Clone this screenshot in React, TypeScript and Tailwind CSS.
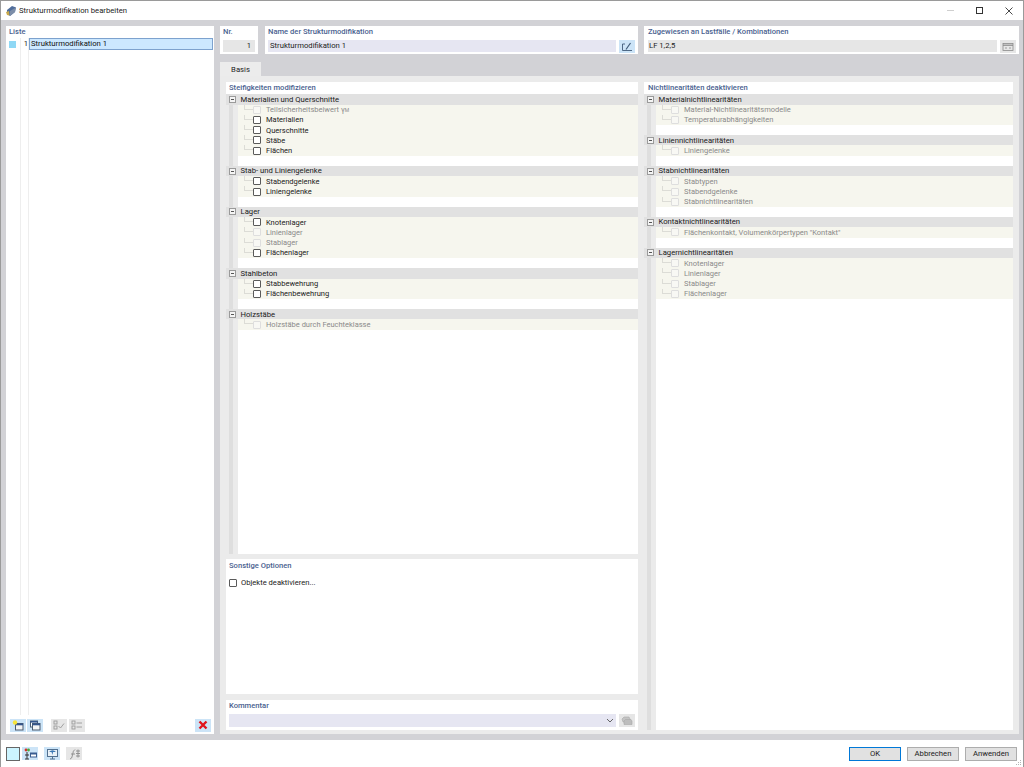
import React from "react";

type Item = { label: string; on?: boolean; sub?: string };
type Group = { title: string; items: Item[] };

const stiffness: Group[] = [
  {
    title: "Materialien und Querschnitte",
    items: [
      { label: "Teilsicherheitsbeiwert γ", sub: "M" },
      { label: "Materialien", on: true },
      { label: "Querschnitte", on: true },
      { label: "Stäbe", on: true },
      { label: "Flächen", on: true },
    ],
  },
  {
    title: "Stab- und Liniengelenke",
    items: [
      { label: "Stabendgelenke", on: true },
      { label: "Liniengelenke", on: true },
    ],
  },
  {
    title: "Lager",
    items: [
      { label: "Knotenlager", on: true },
      { label: "Linienlager" },
      { label: "Stablager" },
      { label: "Flächenlager", on: true },
    ],
  },
  {
    title: "Stahlbeton",
    items: [
      { label: "Stabbewehrung", on: true },
      { label: "Flächenbewehrung", on: true },
    ],
  },
  { title: "Holzstäbe", items: [{ label: "Holzstäbe durch Feuchteklasse" }] },
];

const nonlinear: Group[] = [
  {
    title: "Materialnichtlinearitäten",
    items: [{ label: "Material-Nichtlinearitätsmodelle" }, { label: "Temperaturabhängigkeiten" }],
  },
  { title: "Liniennichtlinearitäten", items: [{ label: "Liniengelenke" }] },
  {
    title: "Stabnichtlinearitäten",
    items: [{ label: "Stabtypen" }, { label: "Stabendgelenke" }, { label: "Stabnichtlinearitäten" }],
  },
  {
    title: "Kontaktnichtlinearitäten",
    items: [{ label: 'Flächenkontakt, Volumenkörpertypen "Kontakt"' }],
  },
  {
    title: "Lagernichtlinearitäten",
    items: [{ label: "Knotenlager" }, { label: "Linienlager" }, { label: "Stablager" }, { label: "Flächenlager" }],
  },
];

function Heading({ children }: { children: React.ReactNode }) {
  return <div className="h-[12px] text-[7.6px] leading-[12px] font-medium text-[#4a5f8f] whitespace-nowrap">{children}</div>;
}

function Tree({ groups }: { groups: Group[] }) {
  return (
    <div className="flex-1 flex flex-col bg-[#ebebeb] relative pt-[0.3px]">
      <span className="absolute left-[3px] top-0 bottom-0 w-[4px] bg-[#dedede]" />
      {groups.map((g) => (
        <div key={g.title} className="flex flex-col relative">
          <div className="h-[10.24px] flex items-center bg-[#e1e1e1]">
            <span className="ml-[3px] w-[7px] h-[7px] border border-[#9a9a9a] bg-[#f4f4f4] flex items-center justify-center shrink-0">
              <span className="w-[3px] h-px bg-[#555]" />
            </span>
            <span className="ml-[4.5px] text-[7.7px] text-[#1a1a1a] whitespace-nowrap">{g.title}</span>
          </div>
          <div className="ml-[12px] bg-[#f6f6ee] flex flex-col">
            {g.items.map((it, i) => (
              <div key={i} className="h-[10.24px] flex items-center relative">
                <span className="absolute left-[6px] top-0 h-[5px] w-[9px] border-l border-b border-[#dcdcd6]" />
                <span
                  className={
                    "ml-[15px] w-[8px] h-[8px] border rounded-[1px] shrink-0 " +
                    (it.on ? "border-[#5a5a5a] bg-white" : "border-[#dedede] bg-[#f8f8f4]")
                  }
                />
                <span className={"ml-[5px] text-[7.5px] whitespace-nowrap " + (it.on ? "text-[#1a1a1a]" : "text-[#8a8a8a]")}>
                  {it.label}
                  {it.sub && <span className="text-[5px]">{it.sub}</span>}
                </span>
              </div>
            ))}
          </div>
          <div className="ml-[12px] h-[10.24px] bg-white" />
        </div>
      ))}
      <div className="ml-[12px] flex-1 bg-white relative" />
    </div>
  );
}

function IconBtn({ active, children, className = "" }: { active?: boolean; children: React.ReactNode; className?: string }) {
  return (
    <span className={"w-[16px] h-[13px] flex items-center justify-center shrink-0 " + (active ? "bg-[#cce4f7] " : "bg-[#e6e6e6] ") + className}>
      {children}
    </span>
  );
}

function WinIcon({ spark }: { spark?: boolean }) {
  return (
    <svg width="12" height="11" viewBox="0 0 12 11">
      {!spark && <rect x="1.5" y="1" width="7" height="6" fill="#fff" stroke="#4a5a70" />}
      {!spark && <rect x="1.5" y="1" width="7" height="1.6" fill="#33548c" />}
      <rect x="3.5" y="3.5" width="7.5" height="6.5" fill="#f4f4f4" stroke="#4a5a70" />
      <rect x="3.5" y="3.5" width="7.5" height="1.8" fill="#33548c" />
      {spark && <circle cx="3" cy="2.5" r="2.2" fill="#f7e43a" />}
    </svg>
  );
}

export default function App() {
  return (
    <div className="w-[1024px] h-[767px] flex flex-col overflow-hidden bg-white border-t border-x border-[#9a9a9a] font-['Roboto','Noto_Sans',sans-serif]">
      {/* title bar */}
      <div className="h-[19px] shrink-0 flex items-center pl-[4px]">
        <svg width="12" height="12" viewBox="0 0 12 12">
          <path d="M2 5 L7 1 L11 2.5 L10 7 L5 11 L2 9Z" fill="#4f6d9c" />
          <path d="M5 6 L10.5 2.8 L10 7 L5 11Z" fill="#7d8ea8" />
          <path d="M1 7 L4 6 L4.6 10.5 L2 10Z" fill="#c9a94a" />
        </svg>
        <span className="ml-[2px] text-[7.7px] text-[#222] whitespace-nowrap">Strukturmodifikation bearbeiten</span>
        <div className="ml-auto flex items-center">
          <span className="w-[7px] h-px bg-[#cfcfcf] mr-[22px]" />
          <span className="w-[7px] h-[7px] border border-[#333] mr-[22px]" />
          <svg className="mr-[10px]" width="8" height="8" viewBox="0 0 8 8">
            <path d="M0.5 0.5 L7.5 7.5 M7.5 0.5 L0.5 7.5" stroke="#333" strokeWidth="0.9" />
          </svg>
        </div>
      </div>

      {/* main area */}
      <div className="h-[720px] shrink-0 bg-[#d2d2d6] flex gap-[6px] pl-[5px] pr-[4px] pt-[6px] pb-[6px]">
        {/* list */}
        <div className="w-[208px] shrink-0 bg-white flex flex-col">
          <div className="h-[12px] pl-[3px] text-[7.6px] leading-[12px] font-medium text-[#4a5f8f]">Liste</div>
          <div className="flex-1 relative flex flex-col">
            <span className="absolute left-[14px] top-0 bottom-[2px] w-px bg-[#eeeeee]" />
            <span className="absolute left-[22px] top-0 bottom-[2px] w-px bg-[#eeeeee]" />
            <div className="h-[12px] flex items-center relative">
              <span className="ml-[3px] w-[7px] h-[7px] bg-[#8fd8f5]" />
              <span className="ml-[5px] w-[7px] text-[7.7px] text-[#222] text-right">1</span>
              <span className="ml-[1px] w-[184px] h-[12px] flex items-center pl-[1px] bg-[#cce8ff] border border-[#7da2ce] text-[7.7px] text-[#111] whitespace-nowrap">
                Strukturmodifikation 1
              </span>
            </div>
          </div>
          <div className="h-[17px] flex items-center gap-[1px] pl-[4px] pr-[3px] pb-[1px]">
            <IconBtn active><WinIcon spark /></IconBtn>
            <IconBtn active><WinIcon /></IconBtn>
            <IconBtn className="ml-[7px]">
              <svg width="12" height="10" viewBox="0 0 12 10" fill="none" stroke="#9a9a9a" strokeWidth="0.9">
                <rect x="1" y="1" width="3" height="3" />
                <rect x="1" y="6" width="3" height="3" />
                <path d="M5.5 6 L7.5 8 L11 3.5" />
              </svg>
            </IconBtn>
            <IconBtn className="ml-[1px]">
              <svg width="12" height="10" viewBox="0 0 12 10" fill="none" stroke="#9a9a9a" strokeWidth="0.9">
                <rect x="1" y="1" width="3" height="3" />
                <rect x="1" y="6" width="3" height="3" />
                <path d="M5.5 3 H11 M5.5 7 H11" />
              </svg>
            </IconBtn>
            <IconBtn active className="ml-auto">
              <svg width="10" height="10" viewBox="0 0 10 10">
                <path d="M1.5 1.5 L8.5 8.5 M8.5 1.5 L1.5 8.5" stroke="#e0141c" strokeWidth="2.4" />
              </svg>
            </IconBtn>
          </div>
        </div>

        {/* right side */}
        <div className="flex-1 flex flex-col min-w-0">
          <div className="h-[28px] shrink-0 flex">
            <div className="w-[38px] shrink-0 bg-white px-[3px] flex flex-col">
              <Heading>Nr.</Heading>
              <div className="mt-[2px] h-[12px] bg-[#e6e6e6] text-[7.7px] leading-[12px] text-right pr-[4px] text-[#222]">1</div>
            </div>
            <div className="ml-[7px] w-[373px] shrink-0 bg-white px-[3px] flex flex-col">
              <Heading>Name der Strukturmodifikation</Heading>
              <div className="mt-[2px] flex gap-[3px]">
                <div className="flex-1 h-[12px] bg-[#e6e6f2] text-[7.7px] leading-[12px] pl-[2px] text-[#222]">Strukturmodifikation 1</div>
                <IconBtn active>
                  <svg width="12" height="10" viewBox="0 0 12 10" fill="none" stroke="#3f5a78" strokeWidth="0.9">
                    <path d="M4 2 H1.5 V8.5 H11" />
                    <path d="M5 7.5 L9.5 1" strokeWidth="1.2" />
                  </svg>
                </IconBtn>
              </div>
            </div>
            <div className="ml-[6px] flex-1 bg-white pl-[4px] pr-[3px] flex flex-col">
              <Heading>Zugewiesen an Lastfälle / Kombinationen</Heading>
              <div className="mt-[2px] flex gap-[3px]">
                <div className="flex-1 h-[12px] bg-[#e6e6e6] text-[7.7px] leading-[12px] pl-[1px] text-[#222]">LF 1,2,5</div>
                <IconBtn>
                  <svg width="12" height="10" viewBox="0 0 12 10" fill="none" stroke="#8a8a8a" strokeWidth="0.8">
                    <rect x="1" y="1.5" width="10" height="7" />
                    <path d="M1 3.2 H11" strokeWidth="1.2" />
                    <path d="M3 6 H5 M7 6 H9" />
                  </svg>
                </IconBtn>
              </div>
            </div>
          </div>

          {/* tab strip */}
          <div className="mt-[8px] h-[14px] shrink-0 flex">
            <div className="w-[41px] bg-[#ececec] text-[7.7px] leading-[16px] text-center text-[#222]">Basis</div>
          </div>

          {/* tab body */}
          <div className="flex-1 min-h-0 bg-[#ebebeb] flex gap-[6px] p-[6px] pb-[4px]">
            <div className="w-[412px] shrink-0 flex flex-col">
              <div className="flex-1 min-h-0 bg-white flex flex-col">
                <div className="px-[3px]"><Heading>Steifigkeiten modifizieren</Heading></div>
                <Tree groups={stiffness} />
              </div>
              <div className="mt-[5px] h-[135px] shrink-0 bg-white px-[3px]">
                <div className="pt-[1px]"><Heading>Sonstige Optionen</Heading></div>
                <div className="mt-[5px] flex items-center">
                  <span className="w-[8px] h-[8px] border border-[#5a5a5a] rounded-[1px] bg-white" />
                  <span className="ml-[4px] text-[7.6px] text-[#1a1a1a]">Objekte deaktivieren...</span>
                </div>
              </div>
              <div className="mt-[6px] h-[30px] shrink-0 bg-white px-[3px] flex flex-col">
                <div><Heading>Kommentar</Heading></div>
                <div className="mt-[2px] flex gap-[3px]">
                  <div className="flex-1 h-[13px] bg-[#e6e6f2] flex items-center justify-end pr-[2px]">
                    <svg width="8" height="5" viewBox="0 0 8 5" fill="none" stroke="#555" strokeWidth="0.9">
                      <path d="M1 1 L4 4 L7 1" />
                    </svg>
                  </div>
                  <IconBtn>
                    <svg width="12" height="10" viewBox="0 0 12 10">
                      <path d="M1 3 L3 1 H8 L9 3 V6 H2Z" fill="#c4c4c4" stroke="#a8a8a8" strokeWidth="0.6" />
                      <path d="M3 5 L4.5 3.5 H10 L11 5 V8.5 H3Z" fill="#bdbdbd" stroke="#a8a8a8" strokeWidth="0.6" />
                    </svg>
                  </IconBtn>
                </div>
              </div>
            </div>
            <div className="flex-1 min-w-0 bg-white flex flex-col">
              <div className="pl-[4px] pr-[3px]"><Heading>Nichtlinearitäten deaktivieren</Heading></div>
              <Tree groups={nonlinear} />
            </div>
          </div>
        </div>
      </div>

      {/* footer */}
      <div className="flex-1 flex items-center pl-[5px] pr-[5px] relative">
        <span className="w-[14px] h-[14px] border border-[#666] bg-[#ccf4ff]" />
        <IconBtn active className="ml-[2px]">
          <svg width="14" height="12" viewBox="0 0 14 12">
            <circle cx="3" cy="2" r="1.4" fill="#d4342c" />
            <circle cx="5.5" cy="2" r="1.4" fill="#49a83d" />
            <path d="M4 4 V11 M2 11 H6 M2 7 H6" stroke="#333" strokeWidth="1" />
            <rect x="7.5" y="5" width="6" height="4" fill="#fff" stroke="#3a5c90" />
            <rect x="7.5" y="5" width="6" height="1.5" fill="#3a5c90" />
          </svg>
        </IconBtn>
        <IconBtn active className="ml-[6px]">
          <svg width="13" height="12" viewBox="0 0 13 12">
            <rect x="1.5" y="1.5" width="10" height="7" fill="#eaf2f8" stroke="#52708f" />
            <path d="M3 4 Q6.5 0.5 10 4 L7 4 L6.5 7 L5.5 4Z" fill="#3c78b4" />
            <path d="M6.5 8.5 V11 M4 11 H9" stroke="#52708f" />
          </svg>
        </IconBtn>
        <IconBtn className="ml-[6px]">
          <svg width="13" height="12" viewBox="0 0 13 12" fill="none" stroke="#8a8a8a" strokeWidth="0.9">
            <path d="M2 11 Q4 11 4.5 7 Q5 2 7 1.5" />
            <path d="M3 6 H7" />
            <path d="M8 3 H12 M8 5.5 H12 M8 8 H12 M10 1.5 V9.5" />
          </svg>
        </IconBtn>
        <div className="ml-auto flex gap-[6px] mr-[1px]">
          <button className="w-[52px] h-[14px] bg-[#e1e1e1] border-[1.5px] border-[#0078d7] text-[7.7px] leading-[10px] text-[#1a1a1a]">OK</button>
          <button className="w-[52px] h-[14px] bg-[#e1e1e1] border border-[#adadad] text-[7.7px] leading-[10px] text-[#1a1a1a]">Abbrechen</button>
          <button className="w-[52px] h-[14px] bg-[#e1e1e1] border border-[#adadad] text-[7.7px] leading-[10px] text-[#1a1a1a]">Anwenden</button>
        </div>
        <svg className="absolute right-[1px] bottom-[1px]" width="6" height="6" viewBox="0 0 6 6" fill="#b5b5b5">
          <rect x="4" y="0" width="1" height="1" />
          <rect x="2" y="2" width="1" height="1" />
          <rect x="4" y="2" width="1" height="1" />
          <rect x="0" y="4" width="1" height="1" />
          <rect x="2" y="4" width="1" height="1" />
          <rect x="4" y="4" width="1" height="1" />
        </svg>
      </div>
    </div>
  );
}
